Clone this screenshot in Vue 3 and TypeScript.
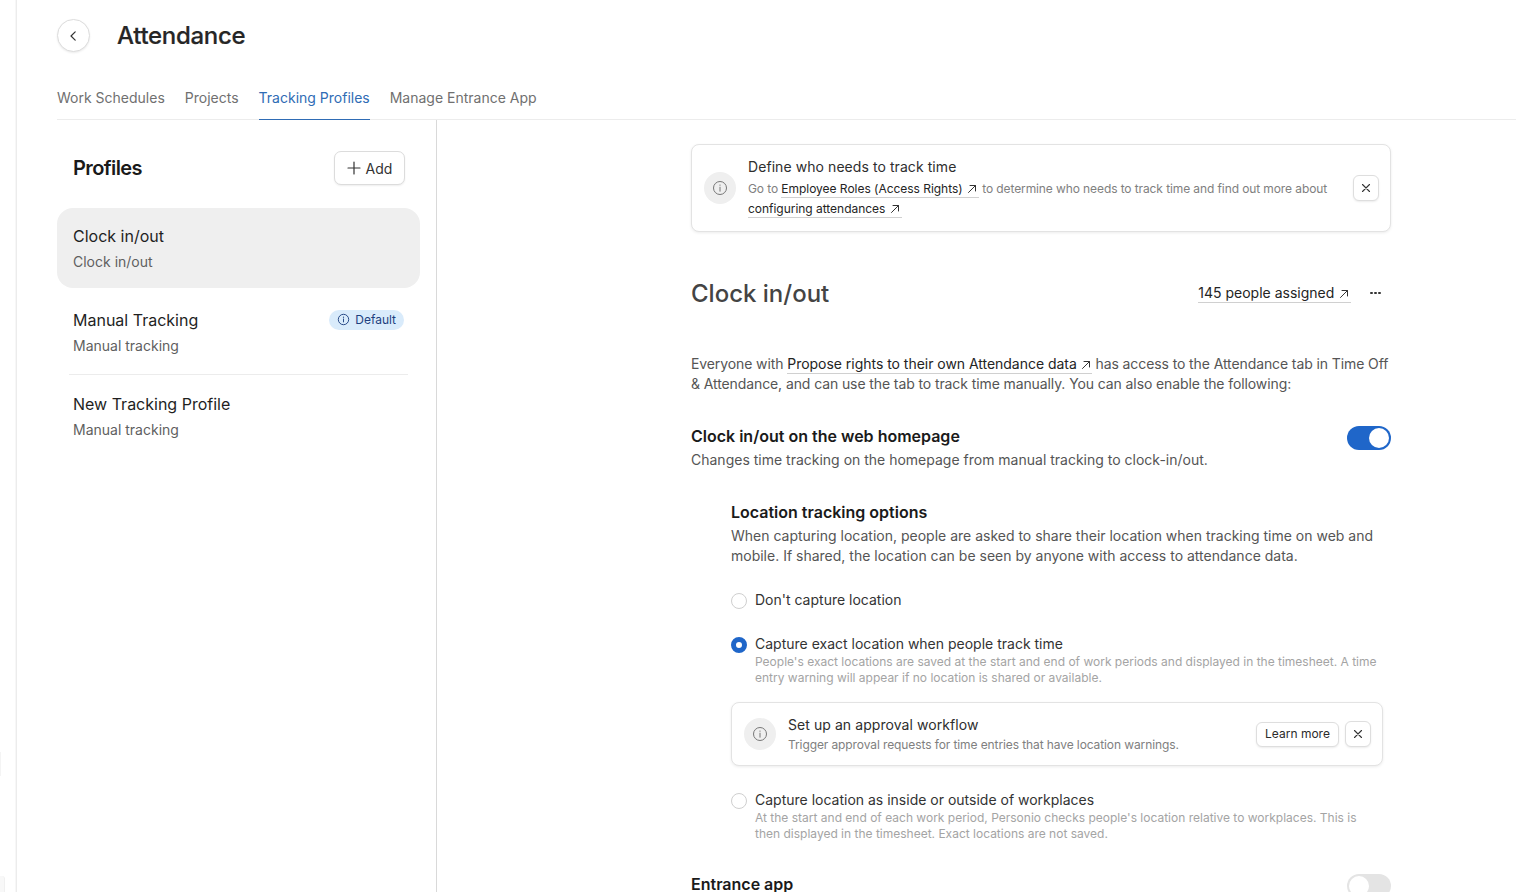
<script setup lang="ts">
interface Profile { name: string; sub: string; active?: boolean; badge?: string }
const profiles: Profile[] = [
  { name: 'Clock in/out', sub: 'Clock in/out', active: true },
  { name: 'Manual Tracking', sub: 'Manual tracking', badge: 'Default' },
  { name: 'New Tracking Profile', sub: 'Manual tracking' },
]
const tabs = ['Work Schedules', 'Projects', 'Tracking Profiles', 'Manage Entrance App']
</script>

<template>
  <div class="page">
    <div class="rail"><span class="peek a"></span><span class="peek b"></span></div>
    <div class="main">
      <header class="head">
        <button class="back" aria-label="Back">
          <svg width="16" height="16" viewBox="0 0 16 16" fill="none"><path d="M9.2 3.8 5 8l4.2 4.2" stroke="#333" stroke-width="1.2" stroke-linecap="round" stroke-linejoin="round"/></svg>
        </button>
        <h1>Attendance</h1>
      </header>
      <nav class="tabs">
        <a v-for="t in tabs" :key="t" class="tab" :class="{ on: t === 'Tracking Profiles' }">{{ t }}</a>
      </nav>
      <div class="body">
        <aside class="side">
          <div class="side-head">
            <h2>Profiles</h2>
            <button class="add">
              <svg width="14" height="14" viewBox="0 0 14 14" fill="none"><path d="M7 1v12M1 7h12" stroke="#333" stroke-width="1.2" stroke-linecap="round"/></svg>
              Add
            </button>
          </div>
          <div class="list">
            <div v-for="(p, i) in profiles" :key="p.name" class="item" :class="{ active: p.active, ruled: i === 1 }">
              <div class="item-top">
                <span class="item-name">{{ p.name }}</span>
                <span v-if="p.badge" class="badge">
                  <svg width="13" height="13" viewBox="0 0 14 14" fill="none"><circle cx="7" cy="7" r="5.6" stroke="#1d3f7f" stroke-width="1"/><path d="M7 6.4v3.2" stroke="#1d3f7f" stroke-width="1" stroke-linecap="round"/><circle cx="7" cy="4.5" r=".65" fill="#1d3f7f"/></svg>
                  {{ p.badge }}
                </span>
              </div>
              <div class="item-sub">{{ p.sub }}</div>
            </div>
          </div>
        </aside>
        <section class="content">
          <div class="notice top">
            <span class="info-dot">
              <svg width="16" height="16" viewBox="0 0 16 16" fill="none"><circle cx="8" cy="8" r="6.5" stroke="#777" stroke-width="1"/><path d="M8 7.2v4" stroke="#777" stroke-width="1" stroke-linecap="round"/><circle cx="8" cy="5.1" r=".7" fill="#777"/></svg>
            </span>
            <div class="notice-text">
              <div class="notice-title">Define who needs to track time</div>
              <p class="notice-desc">Go to <a class="link">Employee Roles (Access Rights) <svg class="ext" width="10" height="10" viewBox="0 0 10 10" fill="none"><path d="M1.5 8.5l7-7M3 1.5h5.5V7" stroke="#333" stroke-width="1" stroke-linecap="round"/></svg></a> to determine who needs to track time and find out more about <a class="link">configuring attendances <svg class="ext" width="10" height="10" viewBox="0 0 10 10" fill="none"><path d="M1.5 8.5l7-7M3 1.5h5.5V7" stroke="#333" stroke-width="1" stroke-linecap="round"/></svg></a></p>
            </div>
            <button class="icon-btn" aria-label="Close">
              <svg width="10" height="10" viewBox="0 0 10 10" fill="none"><path d="M1.5 1.5l7 7M8.5 1.5l-7 7" stroke="#333" stroke-width="1.1" stroke-linecap="round"/></svg>
            </button>
          </div>

          <div class="title-row">
            <h2 class="big">Clock in/out</h2>
            <div class="title-right">
              <a class="link assigned">145 people assigned <svg class="ext" width="10" height="10" viewBox="0 0 10 10" fill="none"><path d="M1.5 8.5l7-7M3 1.5h5.5V7" stroke="#333" stroke-width="1" stroke-linecap="round"/></svg></a>
              <span class="dots"><i></i><i></i><i></i></span>
            </div>
          </div>

          <p class="para intro">Everyone with <a class="link">Propose rights to their own Attendance data <svg class="ext" width="10" height="10" viewBox="0 0 10 10" fill="none"><path d="M1.5 8.5l7-7M3 1.5h5.5V7" stroke="#333" stroke-width="1" stroke-linecap="round"/></svg></a> has access to the Attendance tab in Time Off &amp; Attendance, and can use the tab to track time manually. You can also enable the following:</p>

          <div class="setting">
            <div>
              <h3>Clock in/out on the web homepage</h3>
              <p class="para">Changes time tracking on the homepage from manual tracking to clock-in/out.</p>
            </div>
            <span class="toggle on"><i></i></span>
          </div>

          <div class="options">
            <h3>Location tracking options</h3>
            <p class="para">When capturing location, people are asked to share their location when tracking time on web and mobile. If shared, the location can be seen by anyone with access to attendance data.</p>

            <div class="radio first">
              <span class="dot"></span>
              <div class="radio-label">Don't capture location</div>
            </div>
            <div class="radio second">
              <span class="dot sel"></span>
              <div>
                <div class="radio-label">Capture exact location when people track time</div>
                <p class="radio-desc">People's exact locations are saved at the start and end of work periods and displayed in the timesheet. A time entry warning will appear if no location is shared or available.</p>
              </div>
            </div>
            <div class="notice inner">
              <span class="info-dot">
                <svg width="16" height="16" viewBox="0 0 16 16" fill="none"><circle cx="8" cy="8" r="6.5" stroke="#777" stroke-width="1"/><path d="M8 7.2v4" stroke="#777" stroke-width="1" stroke-linecap="round"/><circle cx="8" cy="5.1" r=".7" fill="#777"/></svg>
              </span>
              <div class="notice-text">
                <div class="notice-title">Set up an approval workflow</div>
                <p class="notice-desc">Trigger approval requests for time entries that have location warnings.</p>
              </div>
              <button class="learn">Learn more</button>
              <button class="icon-btn" aria-label="Close">
                <svg width="10" height="10" viewBox="0 0 10 10" fill="none"><path d="M1.5 1.5l7 7M8.5 1.5l-7 7" stroke="#333" stroke-width="1.1" stroke-linecap="round"/></svg>
              </button>
            </div>
            <div class="radio third">
              <span class="dot"></span>
              <div>
                <div class="radio-label">Capture location as inside or outside of workplaces</div>
                <p class="radio-desc">At the start and end of each work period, Personio checks people's location relative to workplaces. This is then displayed in the timesheet. Exact locations are not saved.</p>
              </div>
            </div>
          </div>

          <div class="setting entrance">
            <h3>Entrance app</h3>
            <span class="toggle"><i></i></span>
          </div>
        </section>
      </div>
    </div>
  </div>
</template>

<style>
html, body { margin: 0; background: #fff; overflow: hidden; }
</style>

<style scoped>
* { box-sizing: border-box; }
.page { display: flex; width: 1516px; height: 892px; overflow: hidden; background: #fff; font-family: Inter, "Liberation Sans", sans-serif; color: #1f1f1f; }
.rail { width: 17px; flex: none; border-right: 1px solid #ececec; box-shadow: inset -1px 0 0 #f7f7f7; background: #fff; position: relative; }
.peek { position: absolute; left: 0; background: #f4f4f4; }
.peek.a { top: 752px; width: 1px; height: 24px; }
.peek.b { top: 876px; width: 5px; height: 16px; background: #f8f8f8; border-right: 1px solid #f0f0f0; border-top-right-radius: 3px; }
.main { flex: 1; min-width: 0; padding-left: 40px; display: flex; flex-direction: column; }
h1, h2, h3, p { margin: 0; }
button { font-family: inherit; background: #fff; cursor: pointer; padding: 0; }
.head { display: flex; align-items: center; height: 71px; }
.back { width: 33px; height: 33px; border-radius: 50%; border: 1px solid #dcdcdc; box-shadow: 0 1px 2px rgba(0,0,0,.08); display: flex; align-items: center; justify-content: center; margin-right: 27px; }
h1 { font-size: 24px; font-weight: 500; color: #262626; letter-spacing: -.3px; -webkit-text-stroke: .2px #262626; }
.tabs { display: flex; gap: 20px; height: 49px; border-bottom: 1px solid #ececec; align-items: stretch; }
.tab { font-size: 14px; color: #707070; line-height: 20px; padding-top: 17px; margin-bottom: -1px; border-bottom: 1px solid transparent; }
.tab.on { color: #2f6cb5; border-bottom-color: #2f6cb5; }
.body { flex: 1; display: flex; min-height: 0; }
.side { width: 380px; flex: none; border-right: 1px solid #d9d9d9; padding-right: 16px; }
.side-head { display: flex; justify-content: space-between; align-items: center; padding: 31px 15px 23px 16px; height: 88px; }
.side-head h2 { font-size: 20px; font-weight: 600; color: #1a1a1a; letter-spacing: -.6px; }
.add { display: flex; align-items: center; gap: 5px; height: 34px; width: 71px; justify-content: center; border: 1px solid #dcdcdc; border-radius: 7px; font-size: 14px; color: #333; box-shadow: 0 1px 2px rgba(0,0,0,.07); }
.item { height: 80px; padding: 18px 16px 0; position: relative; border-radius: 16px; }
.item.active { background: #efefef; }
.item + .item { margin-top: 4px; }
.item.ruled { margin-top: 4px; height: 83px; }
.item.ruled::after { content: ""; position: absolute; left: 12px; right: 12px; bottom: 0; height: 1px; background: #ececec; }
.item.ruled + .item { margin-top: 0; height: 83px; padding-top: 19px; }
.item-top { display: flex; justify-content: space-between; align-items: center; height: 20px; }
.item-name { font-size: 16px; color: #1f1f1f; }
.item-sub { margin-top: 6px; font-size: 14px; line-height: 20px; color: #5f5f5f; }
.badge { display: inline-flex; align-items: center; gap: 5px; height: 20px; padding: 0 8px; border-radius: 10px; background: #d9ebfb; color: #1d3f7f; font-size: 12px; margin-top: -1px; }
.content { flex: 1; padding: 24px 125px 0 254px; min-width: 0; }
.notice { display: flex; border: 1px solid #e3e3e3; border-radius: 8px; box-shadow: 0 1px 3px rgba(0,0,0,.08); background: #fff; }
.notice.top { height: 88px; align-items: center; padding: 0 11px 0 12px; }
.info-dot { width: 32px; height: 32px; flex: none; border-radius: 50%; background: #efefef; display: flex; align-items: center; justify-content: center; margin-right: 12px; }
.notice-text { flex: 1; min-width: 0; }
.notice-title { font-size: 14px; line-height: 20px; color: #2e2e2e; letter-spacing: .07px; }
.notice-desc { font-size: 12px; line-height: 20px; color: #808080; letter-spacing: -.1px; }
.notice-desc .link { letter-spacing: -.03px; }
.notice.top .notice-desc { margin-top: 2px; }
.link { color: #242424; border-bottom: 1px solid #d0d0d0; padding-bottom: 1px; }
.ext { vertical-align: -1px; margin-left: 1px; margin-right: 2px; }
.icon-btn { width: 26px; height: 26px; flex: none; border: 1px solid #dedede; border-radius: 6px; box-shadow: 0 1px 2px rgba(0,0,0,.08); display: flex; align-items: center; justify-content: center; }
.title-row { display: flex; justify-content: space-between; align-items: center; height: 32px; margin-top: 45px; }
.big { font-size: 24px; font-weight: 500; color: #444; }
.title-right { display: flex; align-items: center; }
.assigned { font-size: 14px; }
.dots { display: flex; gap: 1.5px; margin-left: 19px; margin-right: 10px; }
.dots i { width: 2.6px; height: 2.6px; border-radius: 50%; background: #333; }
.para { font-size: 14px; line-height: 20px; color: #555; }
.title-row + .para { margin-top: 45px; }
.para.intro { letter-spacing: -.1px; }
.para.intro .link { letter-spacing: -.03px; }
.para.intro .ext { margin-left: 0; margin-right: 1px; }
.setting { display: flex; justify-content: space-between; align-items: flex-start; margin-top: 32px; }
.setting .para { margin-top: 4px; }
h3 { font-size: 16px; line-height: 20px; font-weight: 600; color: #1a1a1a; }
.toggle { width: 44px; height: 24px; flex: none; border-radius: 12px; background: #e4e4e4; position: relative; display: block; }
.toggle i { position: absolute; top: 2px; left: 2px; width: 20px; height: 20px; border-radius: 50%; background: #fff; }
.toggle.on { background: #1f66c9; }
.toggle.on i { left: 22px; }
.options { margin: 32px 0 0 40px; }
.options .para { margin-top: 4px; }
.radio { display: flex; gap: 8px; align-items: flex-start; }
.radio.first, .radio.second, .radio.third { margin-top: 24px; }
.dot { width: 16px; height: 16px; flex: none; border-radius: 50%; border: 1px solid #cfcfcf; margin-top: 3px; background: #fff; }
.dot.sel { border: 5.5px solid #1f66c9; }
.radio-label { font-size: 14px; line-height: 20px; color: #333; }
.radio-desc { font-size: 12px; line-height: 16px; color: #a4a4a4; max-width: 626px; }
.notice.inner { width: 652px; height: 64px; margin-top: 16px; align-items: center; padding: 0 11px 0 12px; }
.notice.inner .notice-desc { line-height: 18px; margin-top: 1px; }
.learn { height: 25px; width: 83px; border: 1px solid #dedede; border-radius: 6px; font-size: 12px; color: #2b2b2b; box-shadow: 0 1px 2px rgba(0,0,0,.08); margin-right: 6px; padding-bottom: 1px; }
.entrance { margin-top: 32px; align-items: flex-start; }
</style>
